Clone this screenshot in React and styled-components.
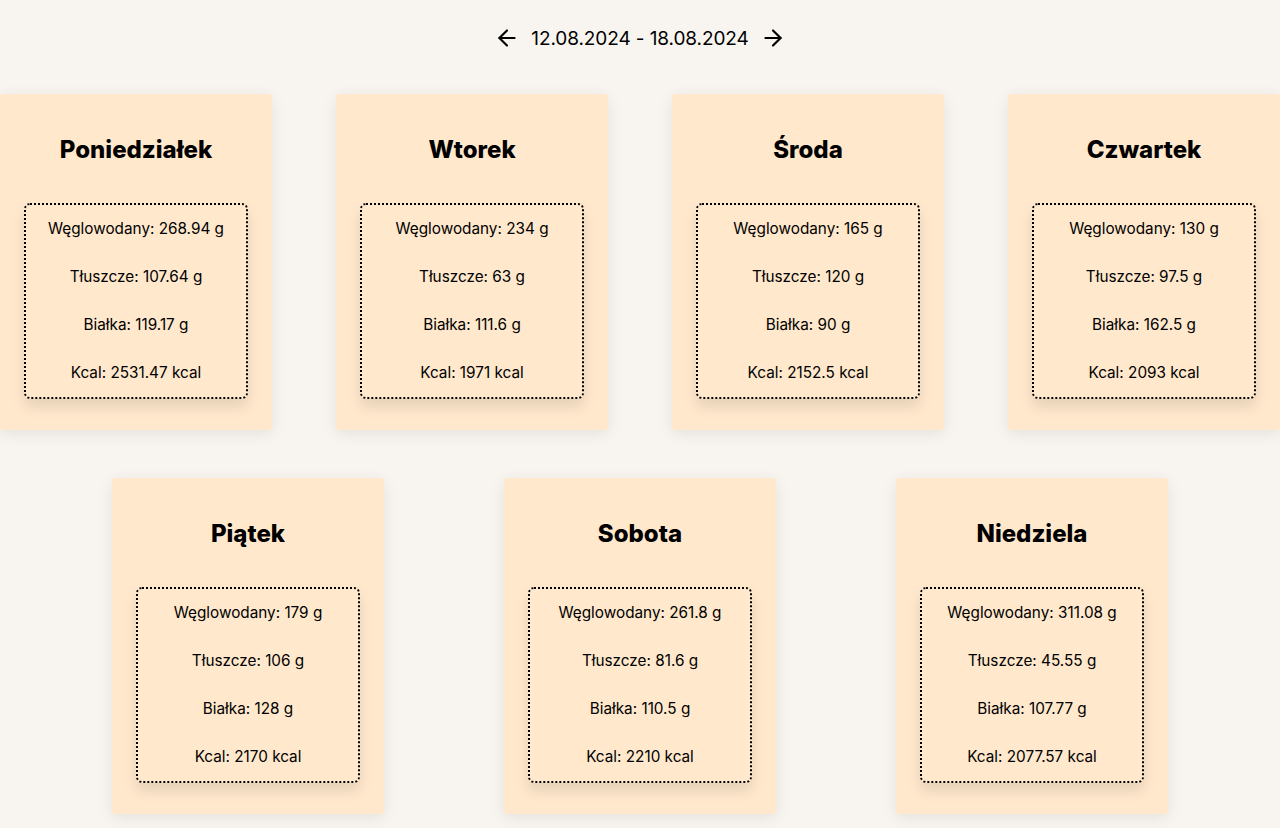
import React from 'react';
import styled, { createGlobalStyle } from 'styled-components';
import { ArrowLeft, ArrowRight } from 'lucide-react';

const GlobalStyle = createGlobalStyle`
  body {
    margin: 0;
    background-color: #f8f5f0;
    font-family: "Inter", "Noto Sans", sans-serif;
    color: #000000;
  }
`;

const Page = styled.div`
  width: 1280px;
  padding-top: 24px;
`;

const WeekNav = styled.div`
  display: flex;
  align-items: center;
  justify-content: center;
  gap: 11px;
  height: 28px;
  margin-bottom: 42px;
`;

const ArrowButton = styled.button`
  display: flex;
  align-items: center;
  background: none;
  border: none;
  padding: 0;
  cursor: pointer;
  color: #000000;
`;

const WeekLabel = styled.span`
  font-size: 19px;
  letter-spacing: -0.1px;
`;

const Row = styled.div`
  display: flex;
  justify-content: center;
  gap: ${(p) => p.$gap}px;
  margin-bottom: 48px;
`;

const Card = styled.div`
  width: 272px;
  height: 336px;
  box-sizing: border-box;
  padding: 42px 24px 31px;
  background-color: #ffe8cc;
  border-radius: 4px;
  box-shadow: 0 4px 16px rgba(0, 0, 0, 0.08);
  display: flex;
  flex-direction: column;
  align-items: center;
`;

const DayTitle = styled.h2`
  margin: 0 0 39px;
  font-size: 24px;
  line-height: 28px;
  font-weight: 800;
`;

const Macros = styled.div`
  width: 224px;
  height: 196px;
  box-sizing: border-box;
  padding: 15px 8px 15px;
  border: 2px dotted #000000;
  border-radius: 6px;
  box-shadow: 0 8px 14px rgba(0, 0, 0, 0.1);
  display: flex;
  flex-direction: column;
  align-items: center;
  gap: 30px;
`;

const MacroLine = styled.p`
  margin: 0;
  font-size: 15.3px;
  line-height: 18px;
`;

const days = [
  { name: 'Poniedziałek', carbs: '268.94', fat: '107.64', protein: '119.17', kcal: '2531.47' },
  { name: 'Wtorek', carbs: '234', fat: '63', protein: '111.6', kcal: '1971' },
  { name: 'Środa', carbs: '165', fat: '120', protein: '90', kcal: '2152.5' },
  { name: 'Czwartek', carbs: '130', fat: '97.5', protein: '162.5', kcal: '2093' },
  { name: 'Piątek', carbs: '179', fat: '106', protein: '128', kcal: '2170' },
  { name: 'Sobota', carbs: '261.8', fat: '81.6', protein: '110.5', kcal: '2210' },
  { name: 'Niedziela', carbs: '311.08', fat: '45.55', protein: '107.77', kcal: '2077.57' },
];

const DayCard = ({ day }) => (
  <Card>
    <DayTitle>{day.name}</DayTitle>
    <Macros>
      <MacroLine>Węglowodany: {day.carbs} g</MacroLine>
      <MacroLine>Tłuszcze: {day.fat} g</MacroLine>
      <MacroLine>Białka: {day.protein} g</MacroLine>
      <MacroLine>Kcal: {day.kcal} kcal</MacroLine>
    </Macros>
  </Card>
);

const App = () => {
  return (
    <Page>
      <GlobalStyle />
      <WeekNav>
        <ArrowButton><ArrowLeft size={26} strokeWidth={2} /></ArrowButton>
        <WeekLabel>12.08.2024 - 18.08.2024</WeekLabel>
        <ArrowButton><ArrowRight size={26} strokeWidth={2} /></ArrowButton>
      </WeekNav>
      <Row $gap={64}>
        {days.slice(0, 4).map((d) => <DayCard key={d.name} day={d} />)}
      </Row>
      <Row $gap={120}>
        {days.slice(4).map((d) => <DayCard key={d.name} day={d} />)}
      </Row>
    </Page>
  );
};

export default App;
